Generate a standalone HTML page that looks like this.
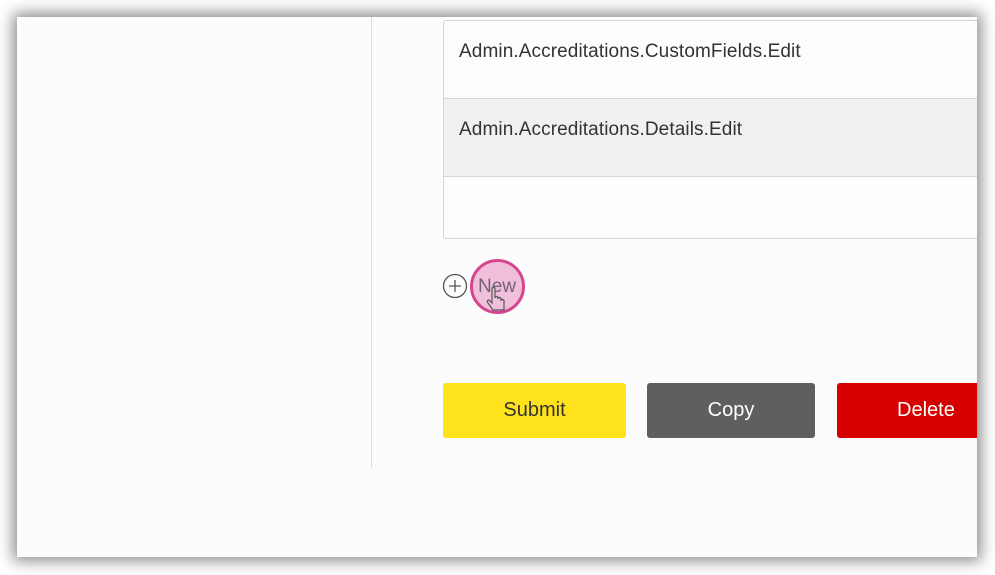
<!DOCTYPE html>
<html><head><style>
*{margin:0;padding:0;box-sizing:border-box}
body{width:995px;height:575px;background:#fff;position:relative;overflow:hidden;font-family:"Liberation Sans",sans-serif}
#panel{position:absolute;left:17px;top:17px;width:960px;height:540px;background:#fcfcfc;box-shadow:0 0 14px 4px rgba(0,0,0,.45);overflow:hidden}
.vl{position:absolute;left:354px;top:0;width:1px;height:451px;background:#ddd}
.tbl{position:absolute;left:426px;top:3px;width:600px;height:219px;border:1px solid #d6d6d6;border-radius:3px;background:#fdfdfd}
.row{position:absolute;left:0;right:0;border-bottom:1px solid #d6d6d6;font-size:19px;color:#333;padding-left:15px;letter-spacing:0.1px}
.btn{position:absolute;top:366px;height:55px;border-radius:3px;font-size:20px;text-align:center;line-height:55px}
</style></head><body>
<div id="panel">
<div class="vl"></div>
<div class="tbl">
 <div class="row" style="top:0;height:78px;padding-top:20px">Admin.Accreditations.CustomFields.Edit</div>
 <div class="row" style="top:78px;height:78px;background:#f1f1f1;padding-top:20px">Admin.Accreditations.Details.Edit</div>
</div>
<svg style="position:absolute;left:425px;top:256px" width="26" height="26"><circle cx="13" cy="13" r="11.5" fill="none" stroke="#555" stroke-width="1.3"/><path d="M13 7v12M7 13h12" stroke="#555" stroke-width="1.3"/></svg>
<div style="position:absolute;left:453px;top:242px;width:55px;height:55px;border-radius:50%;background:#f0c0da;border:3px solid #d6468f"></div>
<div style="position:absolute;left:461px;top:259px;font-size:19px;color:#75607a">New</div>
<svg style="position:absolute;left:468px;top:268px" width="26" height="34"><path d="M7 4v14l-3-3c-2 0-2 2-1 3l5 7h11v-9c0-2-3-2-3 0v-2c0-2-3-2-3 0v-1c0-2-3-2-3 0V4c0-2-3-2-3 0z" fill="#f0c0da" stroke="#555" stroke-width="1.2"/></svg>
<div class="btn" style="left:426px;width:183px;background:#fde21c;color:#333">Submit</div>
<div class="btn" style="left:630px;width:168px;background:#5f5f5f;color:#fff">Copy</div>
<div class="btn" style="left:820px;width:160px;background:#d60000;color:#fff;text-align:left;padding-left:60px">Delete</div>
</div>
</body></html>
